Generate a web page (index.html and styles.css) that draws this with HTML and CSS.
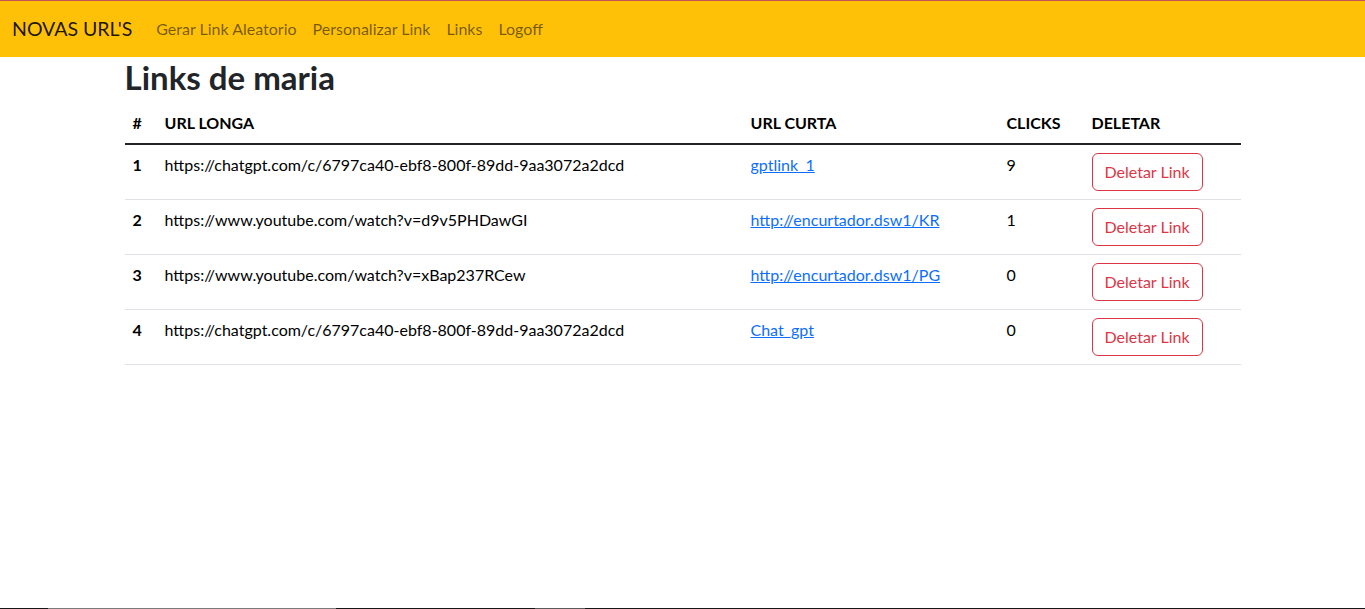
FILE: index.html
```html
<!DOCTYPE html>
<html lang="pt-br">
<head>
<meta charset="utf-8">
<title>Links</title>
<link rel="stylesheet" href="styles.css">
</head>
<body>
<nav class="navbar">
  <a class="brand" href="#">NOVAS URL'S</a>
  <ul class="nav">
    <li><a class="nav-link" href="#">Gerar Link Aleatorio</a></li>
    <li><a class="nav-link" href="#">Personalizar Link</a></li>
    <li><a class="nav-link" href="#">Links</a></li>
    <li><a class="nav-link" href="#">Logoff</a></li>
  </ul>
</nav>
<main class="container">
  <h2 class="title">Links de maria</h2>
  <table class="table">
    <colgroup>
      <col class="c-num"><col class="c-long"><col class="c-short"><col class="c-clicks"><col class="c-del">
    </colgroup>
    <thead>
      <tr><th>#</th><th>URL LONGA</th><th>URL CURTA</th><th>CLICKS</th><th>DELETAR</th></tr>
    </thead>
    <tbody>
      <tr>
        <th>1</th>
        <td>https://chatgpt.com/c/6797ca40-ebf8-800f-89dd-9aa3072a2dcd</td>
        <td><a href="#">gptlink_1</a></td>
        <td>9</td>
        <td><button class="btn-del">Deletar Link</button></td>
      </tr>
      <tr>
        <th>2</th>
        <td>https://www.youtube.com/watch?v=d9v5PHDawGI</td>
        <td><a href="#">http://encurtador.dsw1/KR</a></td>
        <td>1</td>
        <td><button class="btn-del">Deletar Link</button></td>
      </tr>
      <tr>
        <th>3</th>
        <td>https://www.youtube.com/watch?v=xBap237RCew</td>
        <td><a href="#">http://encurtador.dsw1/PG</a></td>
        <td>0</td>
        <td><button class="btn-del">Deletar Link</button></td>
      </tr>
      <tr>
        <th>4</th>
        <td>https://chatgpt.com/c/6797ca40-ebf8-800f-89dd-9aa3072a2dcd</td>
        <td><a href="#">Chat_gpt</a></td>
        <td>0</td>
        <td><button class="btn-del">Deletar Link</button></td>
      </tr>
    </tbody>
  </table>
</main>
<div class="edge"></div>
</body>
</html>
```
FILE: styles.css
```css
* { box-sizing: border-box; }
body {
  margin: 0;
  font-family: Lato, "Noto Sans", sans-serif;
  font-size: 16px;
  line-height: 1.5;
  color: #212529;
  background: #fff;
}
.navbar {
  display: flex;
  align-items: center;
  height: 57px;
  padding: 8px 12px;
  background: #ffc107;
  border-top: 1px solid #c5525a;
}
.brand {
  font-size: 19.5px;
  line-height: 30px;
  padding: 5px 0;
  margin-right: 16px;
  color: rgba(0, 0, 0, .9);
  text-decoration: none;
}
.nav {
  display: flex;
  list-style: none;
  margin: 0;
  padding: 0;
}
.nav-link {
  display: block;
  padding: 8px;
  color: rgba(0, 0, 0, .55);
  text-decoration: none;
}
.container {
  width: 1140px;
  margin: 0 auto;
  padding: 0 12px;
}
.title {
  margin: 0 0 8px;
  padding-top: 2px;
  font-size: 33px;
  font-weight: 700;
  line-height: 36px;
  color: #212529;
}
.table {
  width: 100%;
  border-collapse: collapse;
  vertical-align: top;
  margin-bottom: 16px;
}
.c-num { width: 32px; }
.c-long { width: 586px; }
.c-short { width: 256px; }
.c-clicks { width: 85px; }
.c-del { width: 157px; }
.table th, .table td {
  padding: 8px;
  text-align: left;
  vertical-align: top;
  border-bottom: 1px solid #dee2e6;
}
.table thead th {
  color: #000;
  font-weight: 700;
  border-bottom: 2px solid #212529;
}
.table tbody th { font-weight: 700; color: #000; }
.table td { color: #000; }
.table a { color: #0d6efd; text-decoration: underline; }
.btn-del {
  font-family: inherit;
  font-size: 16px;
  line-height: 1.5;
  padding: 6px 12px;
  color: #dc3545;
  background: transparent;
  border: 1px solid #dc3545;
  border-radius: 6px;
  cursor: pointer;
}
.edge {
  position: fixed;
  left: 0;
  right: 0;
  bottom: 0;
  height: 1px;
  background: linear-gradient(to right,
    #161616 0, #161616 48px,
    #7a7a7a 48px, #7a7a7a 336px,
    #161616 336px, #161616 535px,
    #5a5a5a 535px, #5a5a5a 585px,
    #161616 585px);
}
```
